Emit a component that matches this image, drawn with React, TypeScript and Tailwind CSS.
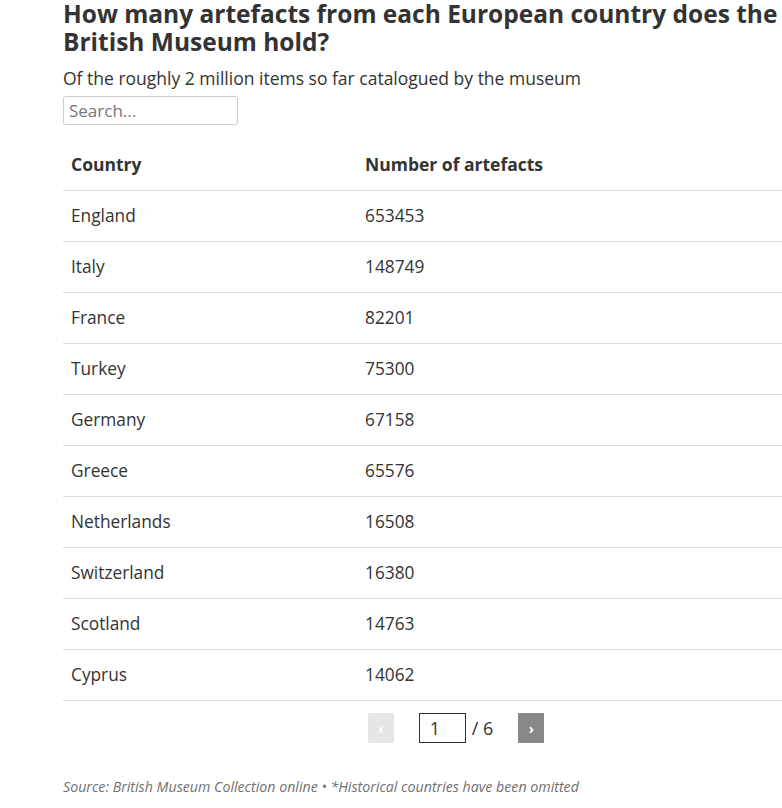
import { useState } from "react";

const rows = [
  { country: "England", count: 653453 },
  { country: "Italy", count: 148749 },
  { country: "France", count: 82201 },
  { country: "Turkey", count: 75300 },
  { country: "Germany", count: 67158 },
  { country: "Greece", count: 65576 },
  { country: "Netherlands", count: 16508 },
  { country: "Switzerland", count: 16380 },
  { country: "Scotland", count: 14763 },
  { country: "Cyprus", count: 14062 },
];

const App = () => {
  const [search, setSearch] = useState("");
  const [page, setPage] = useState("1");

  return (
    <div className="w-[782px] h-[808px] overflow-hidden bg-white text-[#333] font-['Open_Sans',sans-serif]">
      <div className="w-[786px] ml-[63px]">
        <h1 className="max-w-[740px] text-[24.5px] leading-[28px] font-bold text-[#333]">
          How many artefacts from each European country does the British Museum hold?
        </h1>
        <p className="text-[17.5px] leading-[24px] mt-[10px]">
          Of the roughly 2 million items so far catalogued by the museum
        </p>
        <input
          value={search}
          onChange={(e) => setSearch(e.target.value)}
          placeholder="Search..."
          className="mt-[6px] w-[175px] h-[29px] border border-[#ccc] rounded-[3px] px-[5px] text-[17px] placeholder:text-[#777] outline-none"
        />

        <table className="w-full mt-[15px] border-collapse text-[17.3px]">
          <thead>
            <tr className="border-b border-[#ddd]">
              <th className="w-[302px] text-left text-[17.5px] font-bold px-[8px] pt-[12px] pb-[13px] leading-[25px]">Country</th>
              <th className="text-left text-[17.5px] font-bold px-[0px] pt-[12px] pb-[13px] leading-[25px]">Number of artefacts</th>
            </tr>
          </thead>
          <tbody>
            {rows.map((row) => (
              <tr key={row.country} className="border-b border-[#ddd]">
                <td className="px-[8px] py-[12px] leading-[26px]">{row.country}</td>
                <td className="py-[12px] leading-[26px]">{row.count}</td>
              </tr>
            ))}
          </tbody>
        </table>

        <div className="flex items-center justify-center mt-[12px] text-[17px]">
          <button className="w-[26px] h-[30px] bg-[#e6e6e6] text-white text-[14px] font-bold rounded-[1px]">‹</button>
          <input
            value={page}
            onChange={(e) => setPage(e.target.value)}
            className="ml-[25px] w-[47px] h-[30px] border border-[#333] px-[10px] text-[18px] outline-none"
          />
          <span className="ml-[6px] text-[18px]">/ 6</span>
          <button className="ml-[25px] w-[26px] h-[30px] bg-[#888] text-white text-[14px] font-bold rounded-[1px]">›</button>
        </div>

        <p className="mt-[33px] text-[14.2px] italic text-[#707070]">
          Source: British Museum Collection online • *Historical countries have been omitted
        </p>
      </div>
    </div>
  );
};

export default App;
